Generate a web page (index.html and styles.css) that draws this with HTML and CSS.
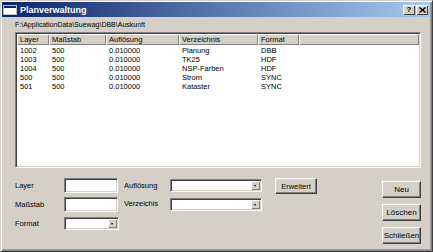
FILE: index.html
```html
<!DOCTYPE html>
<html lang="de">
<head>
    <meta charset="UTF-8">
    <title>Planverwaltung</title>
    <link rel="stylesheet" href="styles.css">
</head>
<body>
    <div class="window">
        <div class="titlebar">
            <svg class="app-icon" width="14" height="10" viewBox="0 0 14 10">
                <rect x="0.5" y="0.5" width="13" height="9" fill="#fff" stroke="#c0c0c0"/>
                <rect x="1" y="1" width="12" height="2" fill="#0a246a"/>
            </svg>
            <span class="title">Planverwaltung</span>
            <span class="caption-btn help">?</span>
            <span class="caption-btn close">
                <svg width="7" height="6" viewBox="0 0 7 6"><path d="M0.5 0.5 L6.5 5.5 M6.5 0.5 L0.5 5.5" stroke="#000" stroke-width="1.4"/></svg>
            </span>
        </div>

        <div class="content">
            <div class="path">F:\ApplicationData\Suewag\DBB\Auskunft</div>

            <div class="listview">
                <table>
                    <colgroup>
                        <col style="width:32px">
                        <col style="width:57px">
                        <col style="width:73px">
                        <col style="width:79px">
                        <col style="width:41px">
                        <col>
                    </colgroup>
                    <thead>
                        <tr>
                            <th>Layer</th>
                            <th>Maßstab</th>
                            <th>Auflösung</th>
                            <th>Verzeichnis</th>
                            <th>Format</th>
                            <th class="filler"></th>
                        </tr>
                    </thead>
                    <tbody>
                        <tr><td>1002</td><td>500</td><td>0.010000</td><td>Planung</td><td>DBB</td><td></td></tr>
                        <tr><td>1003</td><td>500</td><td>0.010000</td><td>TK25</td><td>HDF</td><td></td></tr>
                        <tr><td>1004</td><td>500</td><td>0.010000</td><td>NSP-Farben</td><td>HDF</td><td></td></tr>
                        <tr><td>500</td><td>500</td><td>0.010000</td><td>Strom</td><td>SYNC</td><td></td></tr>
                        <tr><td>501</td><td>500</td><td>0.010000</td><td>Kataster</td><td>SYNC</td><td></td></tr>
                    </tbody>
                </table>
            </div>

            <div class="bottom">
                <div class="form">
                    <span class="label">Layer</span>
                    <span class="edit"></span>
                    <span class="label">Auflösung</span>
                    <span class="combo wide"><span class="drop"></span></span>
                    <span class="button erweitert">Erweitert</span>

                    <span class="label">Maßstab</span>
                    <span class="edit"></span>
                    <span class="label verz">Verzeichis</span>
                    <span class="combo wide"><span class="drop"></span></span>
                    <span></span>

                    <span class="label">Format</span>
                    <span class="combo small"><span class="drop"></span></span>
                </div>

                <div class="actions">
                    <span class="button">Neu</span>
                    <span class="button">Löschen</span>
                    <span class="button">Schließen</span>
                </div>
            </div>
        </div>
    </div>
</body>
</html>
```

FILE: styles.css
```css
body {
    margin: 0;
    font-family: "Liberation Sans", Arial, sans-serif;
    font-size: 7.5px;
    color: #000;
    background: #d4d0c8;
}
.window {
    box-sizing: border-box;
    width: 433px;
    height: 252px;
    background: #d4d0c8;
    border: 1px solid;
    border-color: #d4d0c8 #404040 #404040 #d4d0c8;
    box-shadow: inset 1px 1px #fff, inset -1px -1px #808080, inset -2px -2px #a0a0a0;
    padding: 1px 2px 2px 1px;
}
.titlebar {
    display: flex;
    align-items: center;
    height: 15px;
    padding: 0 2px 0 1px;
    background: linear-gradient(to right, #0a246a, #a6caf0);
}
.app-icon {
    display: block;
    margin-right: 3px;
}
.title {
    color: #fff;
    font-weight: bold;
    font-size: 9px;
}
.caption-btn {
    box-sizing: border-box;
    display: flex;
    align-items: center;
    justify-content: center;
    width: 12px;
    height: 10px;
    background: #d4d0c8;
    box-shadow: inset 1px 1px #fff, inset -1px -1px #404040;
    font-weight: bold;
    font-size: 8px;
    line-height: 10px;
}
.caption-btn.help {
    margin-left: auto;
    margin-right: 1px;
}
.content {
    padding: 0 9px 0 13px;
}
.path {
    height: 15px;
    line-height: 15px;
    font-size: 7px;
}
.listview {
    box-sizing: border-box;
    height: 136px;
    background: #fff;
    border: 1px solid;
    border-color: #808080 #fff #fff #808080;
    box-shadow: inset 1px 1px #404040, inset -1px -1px #d4d0c8;
    padding: 1px;
}
.listview table {
    width: 100%;
    border-collapse: collapse;
    table-layout: fixed;
}
.listview th {
    height: 11px;
    padding: 0 3px;
    font-weight: normal;
    text-align: left;
    background: #d4d0c8;
    box-shadow: inset 1px 1px #fff, inset -1px -1px #808080;
    white-space: nowrap;
    overflow: hidden;
}
.listview td {
    height: 9px;
    line-height: 9px;
    padding: 0 3px;
    white-space: nowrap;
    overflow: hidden;
}
.listview tbody tr:first-child td {
    padding-top: 1px;
}
.bottom {
    display: flex;
    margin-top: 10px;
}
.form {
    display: grid;
    grid-template-columns: 49px 60px 46px 105px 42px;
    grid-auto-rows: 15px;
    row-gap: 4px;
    align-items: center;
}
.label {
    white-space: nowrap;
}
.label.verz {
    margin-top: -3px;
}
.edit,
.combo {
    box-sizing: border-box;
    display: block;
    background: #fff;
    border: 1px solid;
    border-color: #808080 #fff #fff #808080;
    box-shadow: inset 1px 1px #404040, inset -1px -1px #d4d0c8;
}
.edit {
    width: 54px;
    height: 15px;
}
.combo {
    position: relative;
    height: 13px;
}
.combo.wide {
    width: 92px;
}
.combo.small {
    width: 55px;
}
.drop {
    box-sizing: border-box;
    position: absolute;
    top: 1px;
    right: 1px;
    width: 9px;
    height: 9px;
    background: #d4d0c8;
    box-shadow: inset 1px 1px #fff, inset -1px -1px #808080;
}
.drop::after {
    content: "";
    position: absolute;
    left: 3px;
    top: 4px;
    border-left: 1.5px solid transparent;
    border-right: 1.5px solid transparent;
    border-top: 2px solid #000;
}
.button {
    box-sizing: border-box;
    display: flex;
    align-items: center;
    justify-content: center;
    height: 17px;
    background: #d4d0c8;
    border: 1px solid;
    border-color: #fff #404040 #404040 #fff;
    box-shadow: inset -1px -1px #808080;
    white-space: nowrap;
    font-size: 8px;
}
.button.erweitert {
    height: 16px;
    align-self: start;
    font-size: 7.5px;
}
.actions {
    display: flex;
    flex-direction: column;
    gap: 6px;
    width: 39px;
    margin-top: 3px;
    margin-left: auto;
}
```
